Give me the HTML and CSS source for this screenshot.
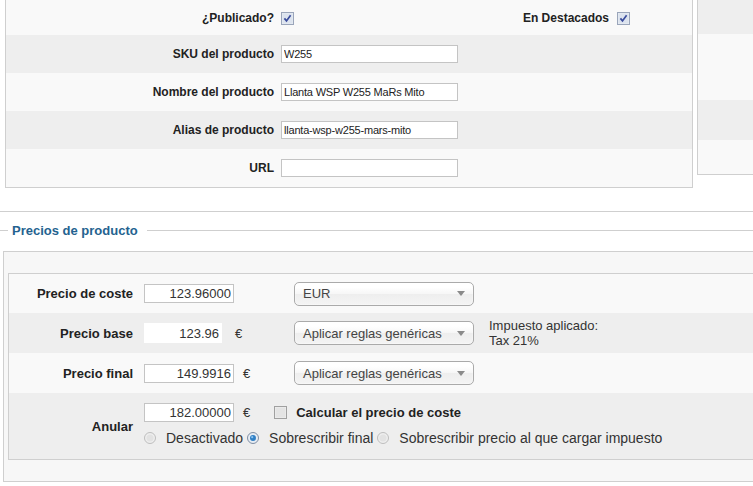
FILE: index.html
```html
<!DOCTYPE html>
<html lang="es">
<head>
<meta charset="utf-8">
<title>Producto</title>
<link rel="stylesheet" href="styles.css">
</head>
<body>
<div class="top">
  <div class="panel main">
    <div class="row light first">
      <span class="lbl">¿Publicado?</span>
      <svg class="cb" width="13" height="13" viewBox="0 0 13 13"><rect x="0.5" y="0.5" width="12" height="12" fill="#e8ecf3" stroke="#9aa5ba"/><rect x="1.5" y="1.5" width="10" height="10" fill="#dce3ee"/><path d="M3.4 6.4 L5.5 8.9 L9.6 3.3" stroke="#3a4c9c" stroke-width="1.7" fill="none"/></svg>
      <span class="lbl2">En Destacados</span>
      <svg class="cb" width="13" height="13" viewBox="0 0 13 13"><rect x="0.5" y="0.5" width="12" height="12" fill="#e8ecf3" stroke="#9aa5ba"/><rect x="1.5" y="1.5" width="10" height="10" fill="#dce3ee"/><path d="M3.4 6.4 L5.5 8.9 L9.6 3.3" stroke="#3a4c9c" stroke-width="1.7" fill="none"/></svg>
    </div>
    <div class="row gray">
      <span class="lbl">SKU del producto</span>
      <input class="txt" type="text" value="W255">
    </div>
    <div class="row light">
      <span class="lbl">Nombre del producto</span>
      <input class="txt" type="text" value="Llanta WSP W255 MaRs Mito">
    </div>
    <div class="row gray">
      <span class="lbl">Alias de producto</span>
      <input class="txt" type="text" value="llanta-wsp-w255-mars-mito">
    </div>
    <div class="row light">
      <span class="lbl">URL</span>
      <input class="txt" type="text" value="">
    </div>
  </div>
  <div class="panel side">
    <div class="srow gray s1"></div>
    <div class="srow light s2"></div>
    <div class="srow gray s3"></div>
    <div class="srow light s4"></div>
  </div>
</div>

<div class="sep"></div>
<div class="legend">Precios de producto</div>

<div class="box">
  <div class="prices">
    <div class="prow light p1">
      <span class="plbl">Precio de coste</span>
      <div class="val"><input class="num" type="text" value="123.96000"></div>
      <div class="sel"><span class="seltext">EUR</span><i class="arrow"></i></div>
    </div>
    <div class="prow gray p2">
      <span class="plbl">Precio base</span>
      <div class="val"><input class="num base" type="text" value="123.96" readonly><span class="eur">€</span></div>
      <div class="sel"><span class="seltext">Aplicar reglas genéricas</span><i class="arrow"></i></div>
      <div class="tax">Impuesto aplicado:<br>Tax 21%</div>
    </div>
    <div class="prow light p3">
      <span class="plbl">Precio final</span>
      <div class="val"><input class="num" type="text" value="149.9916"><span class="eur">€</span></div>
      <div class="sel"><span class="seltext">Aplicar reglas genéricas</span><i class="arrow"></i></div>
    </div>
    <div class="prow gray p4">
      <span class="plbl">Anular</span>
      <div class="anular">
        <div class="line">
          <input class="num" type="text" value="182.00000"><span class="eur">€</span>
          <svg class="cb2" width="13" height="13" viewBox="0 0 13 13"><rect x="0.5" y="0.5" width="12" height="12" fill="#f0f0f0" stroke="#a0a0a0"/><rect x="1.5" y="1.5" width="10" height="10" fill="#e4e4e4"/></svg>
          <span class="calc">Calcular el precio de coste</span>
        </div>
        <div class="line radios">
          <svg class="rd" width="12" height="12" viewBox="0 0 12 12"><circle cx="6" cy="6" r="5.5" fill="#eeeeee" stroke="#bdbdbd"/><circle cx="6" cy="6" r="3.5" fill="#e2e2e2"/></svg>
          <span class="rtext">Desactivado</span>
          <svg class="rd" width="12" height="12" viewBox="0 0 12 12"><circle cx="6" cy="6" r="5.5" fill="#e6ecf3" stroke="#7f8ea3"/><circle cx="6" cy="6" r="3" fill="#2f7fc4"/><circle cx="5.2" cy="5.2" r="1.1" fill="#8cc3ef"/></svg>
          <span class="rtext">Sobrescribir final</span>
          <svg class="rd" width="12" height="12" viewBox="0 0 12 12"><circle cx="6" cy="6" r="5.5" fill="#eeeeee" stroke="#bdbdbd"/><circle cx="6" cy="6" r="3.5" fill="#e2e2e2"/></svg>
          <span class="rtext">Sobrescribir precio al que cargar impuesto</span>
        </div>
      </div>
    </div>
  </div>
</div>
</body>
</html>
```

FILE: styles.css
```css
html, body {
  margin: 0;
  padding: 0;
  background: #ffffff;
}
body {
  width: 753px;
  height: 486px;
  overflow: hidden;
  font-family: "Liberation Sans", Arial, sans-serif;
  color: #222222;
}

.light { background: #f9f9f9; }
.gray { background: #eeeeee; }

/* top area */
.top {
  display: flex;
  align-items: flex-start;
}
.main {
  margin-left: 5px;
  width: 686px;
  border: 1px solid #cfcfcf;
  border-top: 0;
}
.side {
  margin-left: 4px;
  flex: 1;
  border-left: 1px solid #cfcfcf;
  border-bottom: 1px solid #cfcfcf;
}
.row {
  display: flex;
  align-items: center;
  height: 38px;
}
.row.first { height: 35px; }
.lbl {
  width: 268px;
  margin-right: 7px;
  text-align: right;
  font-weight: bold;
  font-size: 12px;
}
.lbl2 {
  margin-left: auto;
  margin-right: 8px;
  font-weight: bold;
  font-size: 12px;
}
.cb { display: block; margin-top: 1px; }
.first .cb:last-child { margin-right: 62px; }
.txt {
  box-sizing: border-box;
  width: 177px;
  height: 18px;
  margin: 0;
  padding: 0 2px;
  border: 1px solid #c4c4c4;
  background: #ffffff;
  font-family: "Liberation Sans", Arial, sans-serif;
  font-size: 11px;
  letter-spacing: -0.2px;
  color: #222222;
  outline: none;
}
.srow.s1 { height: 34px; }
.srow.s2 { height: 66px; }
.srow.s3 { height: 40px; }
.srow.s4 { height: 34px; }

/* separator + legend */
.sep {
  margin-top: 23px;
  border-top: 1px solid #cfcfcf;
}
.legend {
  display: flex;
  align-items: center;
  height: 16px;
  margin-top: 10px;
  font-size: 13px;
  font-weight: bold;
  color: #24628f;
}
.legend::before {
  content: "";
  width: 8px;
  margin-right: 4px;
  border-top: 1px solid #cfcfcf;
}
.legend::after {
  content: "";
  flex: 1;
  margin-left: 9px;
  border-top: 1px solid #cfcfcf;
}

/* prices box */
.box {
  margin-top: 13px;
  margin-left: 3px;
  border: 1px solid #cfcfcf;
  border-right: 0;
  background: #f7f7f7;
  padding: 21px 0 21px 4px;
}
.prices {
  border: 1px solid #cfcfcf;
  border-right: 0;
}
.prow {
  display: grid;
  grid-template-columns: 125px 140px 180px auto;
  column-gap: 10px;
  align-items: center;
  height: 40px;
}
.prow.p1 { height: 39px; }
.prow.p4 { height: 66px; }
.plbl {
  text-align: right;
  padding-right: 1px;
  font-weight: bold;
  font-size: 13px;
}
.val {
  display: flex;
  align-items: center;
}
.num {
  box-sizing: border-box;
  width: 90px;
  height: 19px;
  margin: 0 9px 0 0;
  padding: 0 2px;
  border: 1px solid #c4c4c4;
  background: #ffffff;
  text-align: right;
  font-family: "Liberation Sans", Arial, sans-serif;
  font-size: 13px;
  color: #333333;
  outline: none;
}
.num.base {
  width: 78px;
  height: 20px;
  border-color: #ffffff;
  margin-right: 13px;
}
.eur {
  font-size: 13px;
  color: #333333;
}
.sel {
  box-sizing: border-box;
  display: flex;
  align-items: center;
  height: 24px;
  padding-left: 8px;
  border: 1px solid #aaaaaa;
  border-radius: 5px;
  background: linear-gradient(#ffffff 20%, #f6f6f6 50%, #eeeeee 52%, #f4f4f4);
  box-shadow: 0 0 2px #ffffff inset;
  font-size: 13px;
  color: #444444;
}
.seltext { flex: 1; }
.arrow {
  width: 0;
  height: 0;
  margin-right: 8px;
  border-left: 4px solid transparent;
  border-right: 4px solid transparent;
  border-top: 5px solid #8a8a8a;
}
.tax {
  padding-left: 5px;
  font-size: 13px;
  line-height: 15px;
  color: #333333;
}
.anular {
  grid-column: 2 / -1;
  align-self: start;
  display: flex;
  flex-direction: column;
  gap: 8px;
  padding-top: 10px;
}
.line {
  display: flex;
  align-items: center;
}
.cb2 { margin-left: 24px; margin-right: 9px; display: block; }
.calc {
  font-size: 13px;
  font-weight: bold;
  color: #222222;
}
.rd { display: block; margin: 0 10px 0 0; }
.radios .rd + .rtext + .rd { margin-left: 4px; }
.rtext {
  font-size: 14px;
  color: #333333;
}
```
